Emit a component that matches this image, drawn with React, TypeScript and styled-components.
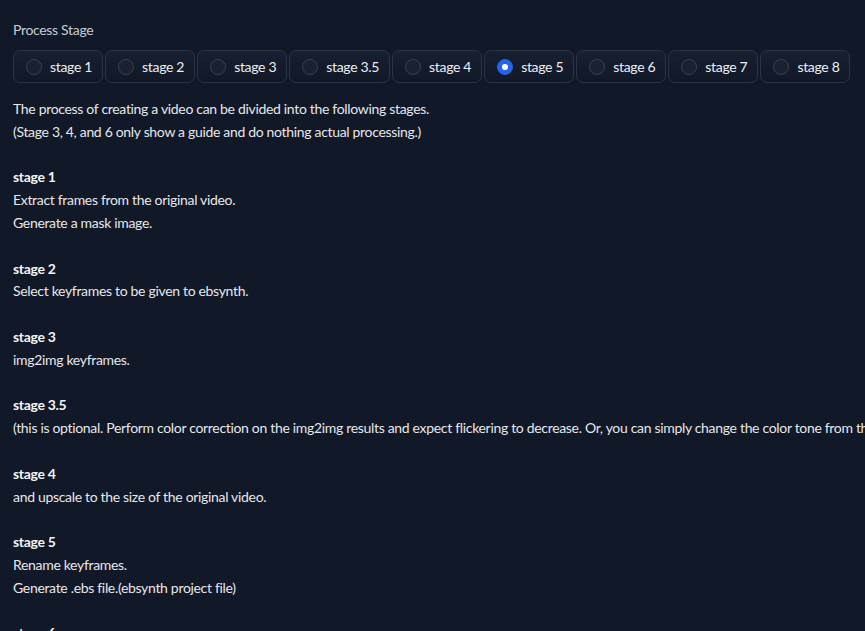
import React from "react";
import styled, { createGlobalStyle } from "styled-components";

const Global = createGlobalStyle`
  html, body { margin: 0; padding: 0; background: #111827; }
  body {
    font-family: Lato, "Liberation Sans", sans-serif;
    color: #e5e7eb;
    overflow: hidden;
    letter-spacing: -0.32px;
  }
`;

const Page = styled.div`
  padding: 21px 13px 0 13px;
  width: 865px;
  height: 631px;
  overflow: hidden;
  box-sizing: border-box;
  white-space: nowrap;
`;

const Label = styled.div`
  font-size: 14px;
  line-height: 18px;
  color: #c7ccd4;
  margin-bottom: 11px;
`;

const RadioRow = styled.div`
  display: flex;
  gap: 2px;
`;

const Option = styled.label`
  display: flex;
  align-items: center;
  gap: 8px;
  height: 33px;
  box-sizing: border-box;
  padding: 0 10px 0 12px;
  border: 1px solid #2b3442;
  border-radius: 7px;
  background: linear-gradient(to top, #111827, #172031);
  font-size: 14px;
  color: #eceef1;
`;

const Circle = styled.span<{ $checked?: boolean }>`
  width: 16px;
  height: 16px;
  border-radius: 50%;
  box-sizing: border-box;
  flex: none;
  border: 1px solid ${(p) => (p.$checked ? "#2563eb" : "#374151")};
  background: ${(p) => (p.$checked ? "#2563eb" : "#1a2231")};
  display: flex;
  align-items: center;
  justify-content: center;
  &::after {
    content: "";
    display: ${(p) => (p.$checked ? "block" : "none")};
    width: 6px;
    height: 6px;
    border-radius: 50%;
    background: #ffffff;
  }
`;

const Prose = styled.div`
  margin-top: 15px;
  font-size: 14px;
  line-height: 22.8px;
  color: #e5e7eb;
`;

const Para = styled.p`
  margin: 0 0 22.8px 0;
`;

const Strong = styled.strong`
  font-weight: 700;
  color: #f3f4f6;
`;

const stages = ["stage 1", "stage 2", "stage 3", "stage 3.5", "stage 4", "stage 5", "stage 6", "stage 7", "stage 8"];

const sections: { title: string; lines: string[] }[] = [
  { title: "stage 1", lines: ["Extract frames from the original video.", "Generate a mask image."] },
  { title: "stage 2", lines: ["Select keyframes to be given to ebsynth."] },
  { title: "stage 3", lines: ["img2img keyframes."] },
  {
    title: "stage 3.5",
    lines: [
      "(this is optional. Perform color correction on the img2img results and expect flickering to decrease. Or, you can simply change the color tone from the generated result.)",
    ],
  },
  { title: "stage 4", lines: ["and upscale to the size of the original video."] },
  { title: "stage 5", lines: ["Rename keyframes.", "Generate .ebs file.(ebsynth project file)"] },
  { title: "stage 6", lines: ["Running ebsynth.(on your self)", "Open the generated .ebs under project directory and press [Run All] button."] },
];

export default function App() {
  return (
    <>
      <Global />
      <Page>
        <Label>Process Stage</Label>
        <RadioRow>
          {stages.map((s) => (
            <Option key={s}>
              <Circle $checked={s === "stage 5"} />
              {s}
            </Option>
          ))}
        </RadioRow>
        <Prose>
          <Para>
            The process of creating a video can be divided into the following stages.
            <br />
            (Stage 3, 4, and 6 only show a guide and do nothing actual processing.)
          </Para>
          {sections.map((sec) => (
            <Para key={sec.title}>
              <Strong>{sec.title}</Strong>
              {sec.lines.map((l, i) => (
                <React.Fragment key={i}>
                  <br />
                  {l}
                </React.Fragment>
              ))}
            </Para>
          ))}
        </Prose>
      </Page>
    </>
  );
}
